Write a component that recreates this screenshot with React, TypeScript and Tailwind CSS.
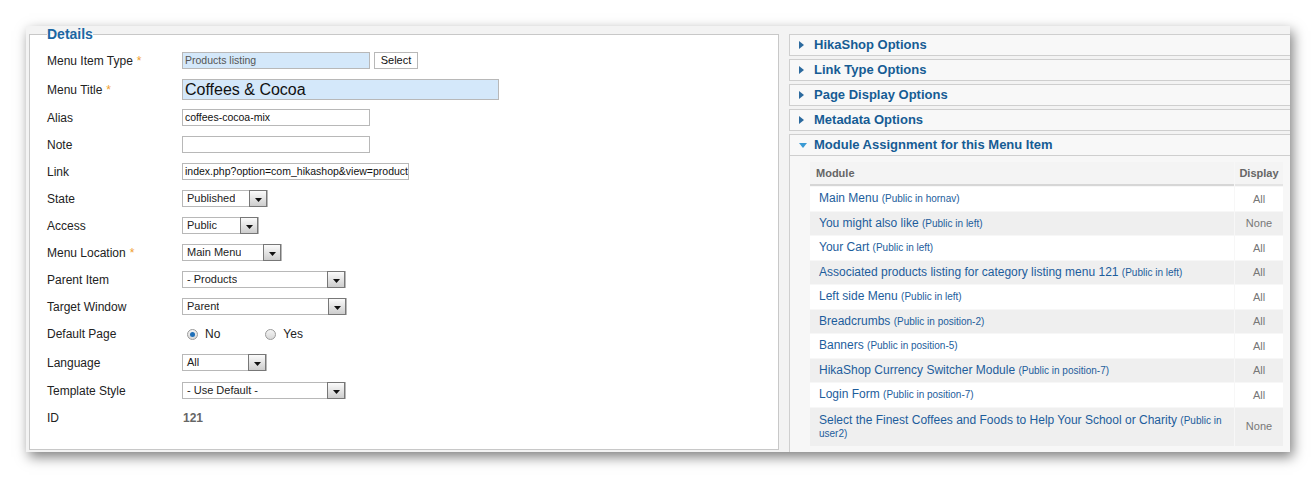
import type { ReactNode } from 'react'

const font = { fontFamily: '"Liberation Sans", Arial, sans-serif' }

type RowProps = {
    label: string
    required?: boolean
    h: string
    children: ReactNode
}

function Row({ label, required, h, children }: RowProps) {
    return (
        <div className={`flex items-center ${h}`}>
            <div className="w-[135px] shrink-0 text-[12px] text-[#222]">
                {label}
                {required && <span className="ml-[4px] text-[#f0a030]">*</span>}
            </div>
            {children}
        </div>
    )
}

function DropArrow() {
    return (
        <span className="ml-auto flex h-[17px] w-[18px] shrink-0 items-end justify-center border border-[#777] bg-gradient-to-b from-[#fbfbfb] to-[#cdcdcd] pb-[4px]">
            <svg width="7" height="4" viewBox="0 0 7 4">
                <path d="M0 0h7L3.5 4z" fill="#111" />
            </svg>
        </span>
    )
}

function Select({ value, w }: { value: string; w: string }) {
    return (
        <div className={`flex h-[17px] items-center border border-[#b8b8b8] bg-white ${w}`}>
            <span className="truncate pl-[4px] text-[11px] text-[#222]">{value}</span>
            <DropArrow />
        </div>
    )
}

function Radio({ checked, label }: { checked?: boolean; label: string }) {
    return (
        <label className="flex items-center gap-[7px] text-[12px] text-[#222]">
            <span className="flex h-[11px] w-[11px] items-center justify-center rounded-full border border-[#9a9a9a] bg-gradient-to-b from-[#f4f4f4] to-[#d8d8d8]">
                {checked && <span className="h-[5px] w-[5px] rounded-full bg-[#1f6fb8]" />}
            </span>
            {label}
        </label>
    )
}

const panels = ['HikaShop Options', 'Link Type Options', 'Page Display Options', 'Metadata Options']

const modules = [
    { name: 'Main Menu', where: 'Public in hornav', display: 'All' },
    { name: 'You might also like', where: 'Public in left', display: 'None' },
    { name: 'Your Cart', where: 'Public in left', display: 'All' },
    { name: 'Associated products listing for category listing menu 121', where: 'Public in left', display: 'All' },
    { name: 'Left side Menu', where: 'Public in left', display: 'All' },
    { name: 'Breadcrumbs', where: 'Public in position-2', display: 'All' },
    { name: 'Banners', where: 'Public in position-5', display: 'All' },
    { name: 'HikaShop Currency Switcher Module', where: 'Public in position-7', display: 'All' },
    { name: 'Login Form', where: 'Public in position-7', display: 'All' },
    { name: 'Select the Finest Coffees and Foods to Help Your School or Charity', where: 'Public in user2', display: 'None' },
]

function PanelHeader({ title, open }: { title: string; open?: boolean }) {
    return (
        <div className="flex h-[22px] items-center border border-[#cfcfcf] bg-[#f8f8f8] pl-[9px]">
            {open ? (
                <svg width="8" height="5" viewBox="0 0 8 5" className="mr-[7px]">
                    <path d="M0 0h8L4 5z" fill="#3a9ad4" />
                </svg>
            ) : (
                <svg width="5" height="8" viewBox="0 0 5 8" className="mr-[10px]">
                    <path d="M0 0l5 4-5 4z" fill="#2c6a9e" />
                </svg>
            )}
            <span className="text-[13px] font-bold text-[#165c94]">{title}</span>
        </div>
    )
}

export default function App() {
    return (
        <div className="min-h-[479px] bg-white pl-[26px] pt-[26px]" style={font}>
            <div className="flex h-[426px] w-[1264px] overflow-hidden bg-[#f3f3f3] shadow-[3px_5px_12px_rgba(0,0,0,0.5)]">
                {/* details form */}
                <div className="shrink-0 pl-[3px]">
                    <fieldset className="h-[424px] w-[750px] border border-[#c8c8c8] bg-white pl-[17px] pt-[4px]">
                        <legend className="text-[14px] font-bold leading-4 text-[#1b67a3]">Details</legend>

                        <Row label="Menu Item Type" required h="h-[29px]">
                            <div className="flex h-[17px] w-[188px] items-center border border-[#b8b8b8] bg-[#d4e8fa] pl-[2px] text-[10.5px] text-[#555]">
                                Products listing
                            </div>
                            <button className="ml-[4px] flex h-[17px] w-[44px] items-center justify-center border border-[#b8b8b8] bg-white text-[11px] text-[#111]">
                                Select
                            </button>
                        </Row>
                        <Row label="Menu Title" required h="h-[29px]">
                            <div className="flex h-[21px] w-[317px] items-center border border-[#b8b8b8] bg-[#d4e8fa] pl-[2px] text-[16px] text-[#111]">
                                Coffees &amp; Cocoa
                            </div>
                        </Row>
                        <Row label="Alias" h="h-[27px]">
                            <div className="flex h-[17px] w-[188px] items-center border border-[#b8b8b8] bg-white pl-[2px] text-[10.5px] text-[#111]">
                                coffees-cocoa-mix
                            </div>
                        </Row>
                        <Row label="Note" h="h-[27px]">
                            <div className="h-[17px] w-[188px] border border-[#b8b8b8] bg-white" />
                        </Row>
                        <Row label="Link" h="h-[27px]">
                            <div className="flex h-[17px] w-[227px] items-center overflow-hidden whitespace-nowrap border border-[#b8b8b8] bg-white pl-[2px] text-[10.5px] text-[#111]">
                                index.php?option=com_hikashop&amp;view=product&amp;layout=listing
                            </div>
                        </Row>
                        <Row label="State" h="h-[27px]">
                            <Select value="Published" w="w-[86px]" />
                        </Row>
                        <Row label="Access" h="h-[27px]">
                            <Select value="Public" w="w-[77px]" />
                        </Row>
                        <Row label="Menu Location" required h="h-[27px]">
                            <Select value="Main Menu" w="w-[100px]" />
                        </Row>
                        <Row label="Parent Item" h="h-[27px]">
                            <Select value="- Products" w="w-[164px]" />
                        </Row>
                        <Row label="Target Window" h="h-[27px]">
                            <Select value="Parent" w="w-[165px]" />
                        </Row>
                        <Row label="Default Page" h="h-[28px]">
                            <div className="flex gap-[45px] pl-[5px]">
                                <Radio checked label="No" />
                                <Radio label="Yes" />
                            </div>
                        </Row>
                        <Row label="Language" h="h-[29px]">
                            <Select value="All" w="w-[85px]" />
                        </Row>
                        <Row label="Template Style" h="h-[27px]">
                            <Select value="- Use Default -" w="w-[164px]" />
                        </Row>
                        <Row label="ID" h="h-[27px]">
                            <span className="pl-[1px] text-[12px] font-bold text-[#666]">121</span>
                        </Row>
                    </fieldset>
                </div>

                {/* option sliders */}
                <div className="ml-[10px] flex w-[510px] shrink-0 flex-col pt-[8px]">
                    <div className="flex flex-col gap-[3px]">
                        {panels.map(p => (
                            <PanelHeader key={p} title={p} />
                        ))}
                        <PanelHeader title="Module Assignment for this Menu Item" open />
                    </div>
                    <div className="flex-1 border-l border-[#cfcfcf] bg-[#f7f7f7] pl-[20px] pt-[6px]">
                        <div className="flex w-[473px] flex-col gap-px">
                            <div className="flex h-[24px] gap-px">
                                <div className="flex flex-1 items-center border-b-2 border-[#d6d6d6] bg-[#f4f4f4] pl-[6px] text-[11px] font-bold text-[#666]">
                                    Module
                                </div>
                                <div className="flex w-[48px] items-center justify-center border-b-2 border-[#e4e4e4] bg-[#f4f4f4] text-[11px] font-bold text-[#666]">
                                    Display
                                </div>
                            </div>
                            {modules.map((m, i) => (
                                <div
                                    key={m.name}
                                    className={`flex gap-px ${i === modules.length - 1 ? 'h-[38px]' : 'h-[23.5px]'}`}
                                >
                                    <div
                                        className={`flex flex-1 items-center pl-[9px] pr-[6px] text-[12px] leading-[13px] text-[#1d5d9c] ${
                                            i % 2 === 1 ? 'bg-[#efefef]' : 'bg-white'
                                        }`}
                                    >
                                        <span>
                                            {m.name} <span className="text-[10px]">({m.where})</span>
                                        </span>
                                    </div>
                                    <div
                                        className={`flex w-[48px] items-center justify-center text-[11px] text-[#777] ${
                                            i % 2 === 1 ? 'bg-[#efefef]' : 'bg-white'
                                        }`}
                                    >
                                        {m.display}
                                    </div>
                                </div>
                            ))}
                        </div>
                    </div>
                </div>
            </div>
        </div>
    )
}
